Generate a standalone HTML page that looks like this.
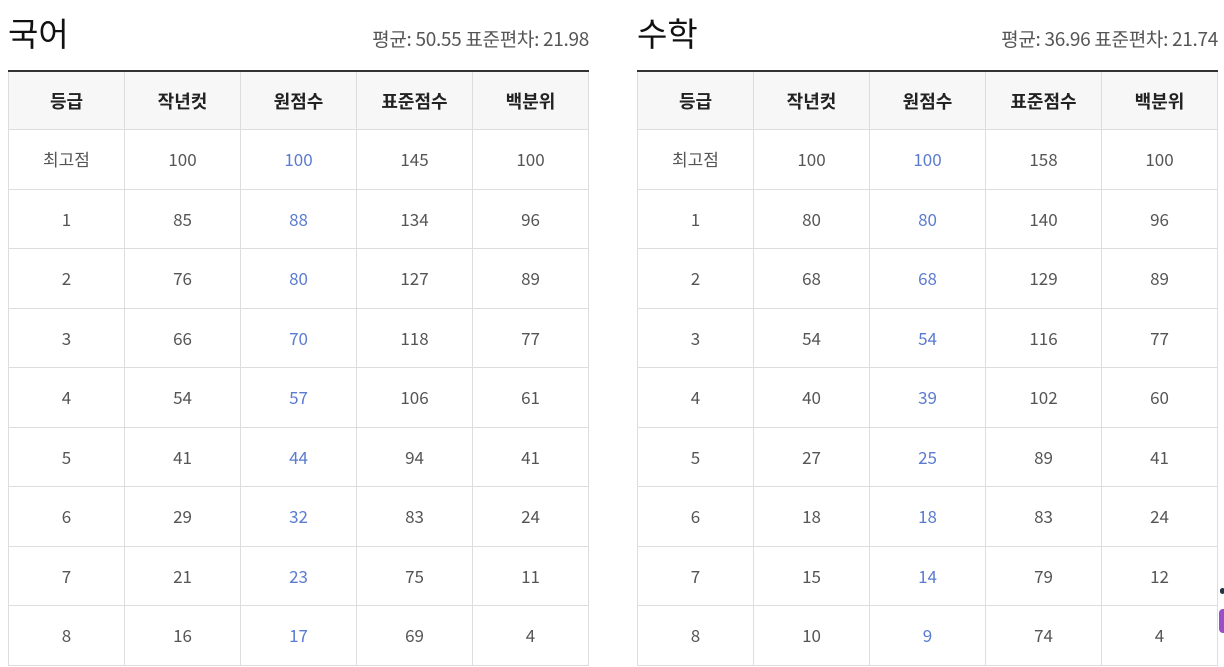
<!DOCTYPE html>
<html><head><meta charset="utf-8"><style>
body{margin:0;background:#fff;font-family:"Noto Sans CJK KR","Liberation Sans",sans-serif;width:1224px;height:667px;overflow:hidden;position:relative}
.box{position:absolute;top:0;width:581px}
h2{position:absolute;left:0;top:10px;margin:0;font-size:33px;font-weight:400;color:#111;line-height:44px}
.st{position:absolute;right:0;top:26px;font-size:19px;color:#555;line-height:26px;letter-spacing:-0.3px}
table{position:absolute;top:70px;left:0;width:581px;border-collapse:collapse;table-layout:fixed;border-top:2px solid #333}
th,td{border:1px solid #ddd;text-align:center;font-size:17px;color:#555;padding:0;line-height:20px}
th{background:#f7f7f7;height:57px;font-weight:700;color:#222;font-size:18px}
td{height:58.5px}
td.b{color:#5a7bd0}
</style></head><body>
<div class="box" style="left:8px"><h2>국어</h2><div class="st">평균: 50.55 표준편차: 21.98</div>
<table><tr><th>등급</th><th>작년컷</th><th>원점수</th><th>표준점수</th><th>백분위</th></tr>
<tr><td>최고점</td><td>100</td><td class="b">100</td><td>145</td><td>100</td></tr>
<tr><td>1</td><td>85</td><td class="b">88</td><td>134</td><td>96</td></tr>
<tr><td>2</td><td>76</td><td class="b">80</td><td>127</td><td>89</td></tr>
<tr><td>3</td><td>66</td><td class="b">70</td><td>118</td><td>77</td></tr>
<tr><td>4</td><td>54</td><td class="b">57</td><td>106</td><td>61</td></tr>
<tr><td>5</td><td>41</td><td class="b">44</td><td>94</td><td>41</td></tr>
<tr><td>6</td><td>29</td><td class="b">32</td><td>83</td><td>24</td></tr>
<tr><td>7</td><td>21</td><td class="b">23</td><td>75</td><td>11</td></tr>
<tr><td>8</td><td>16</td><td class="b">17</td><td>69</td><td>4</td></tr>
</table></div>
<div class="box" style="left:637px"><h2>수학</h2><div class="st">평균: 36.96 표준편차: 21.74</div>
<table><tr><th>등급</th><th>작년컷</th><th>원점수</th><th>표준점수</th><th>백분위</th></tr>
<tr><td>최고점</td><td>100</td><td class="b">100</td><td>158</td><td>100</td></tr>
<tr><td>1</td><td>80</td><td class="b">80</td><td>140</td><td>96</td></tr>
<tr><td>2</td><td>68</td><td class="b">68</td><td>129</td><td>89</td></tr>
<tr><td>3</td><td>54</td><td class="b">54</td><td>116</td><td>77</td></tr>
<tr><td>4</td><td>40</td><td class="b">39</td><td>102</td><td>60</td></tr>
<tr><td>5</td><td>27</td><td class="b">25</td><td>89</td><td>41</td></tr>
<tr><td>6</td><td>18</td><td class="b">18</td><td>83</td><td>24</td></tr>
<tr><td>7</td><td>15</td><td class="b">14</td><td>79</td><td>12</td></tr>
<tr><td>8</td><td>10</td><td class="b">9</td><td>74</td><td>4</td></tr>
</table></div>
<div style="position:absolute;left:1220px;top:588px;width:5px;height:6px;border-radius:3px;background:#234"></div>
<div style="position:absolute;left:1219px;top:609px;width:12px;height:24px;border-radius:4px;background:#9a4fc9"></div>
</body></html>
